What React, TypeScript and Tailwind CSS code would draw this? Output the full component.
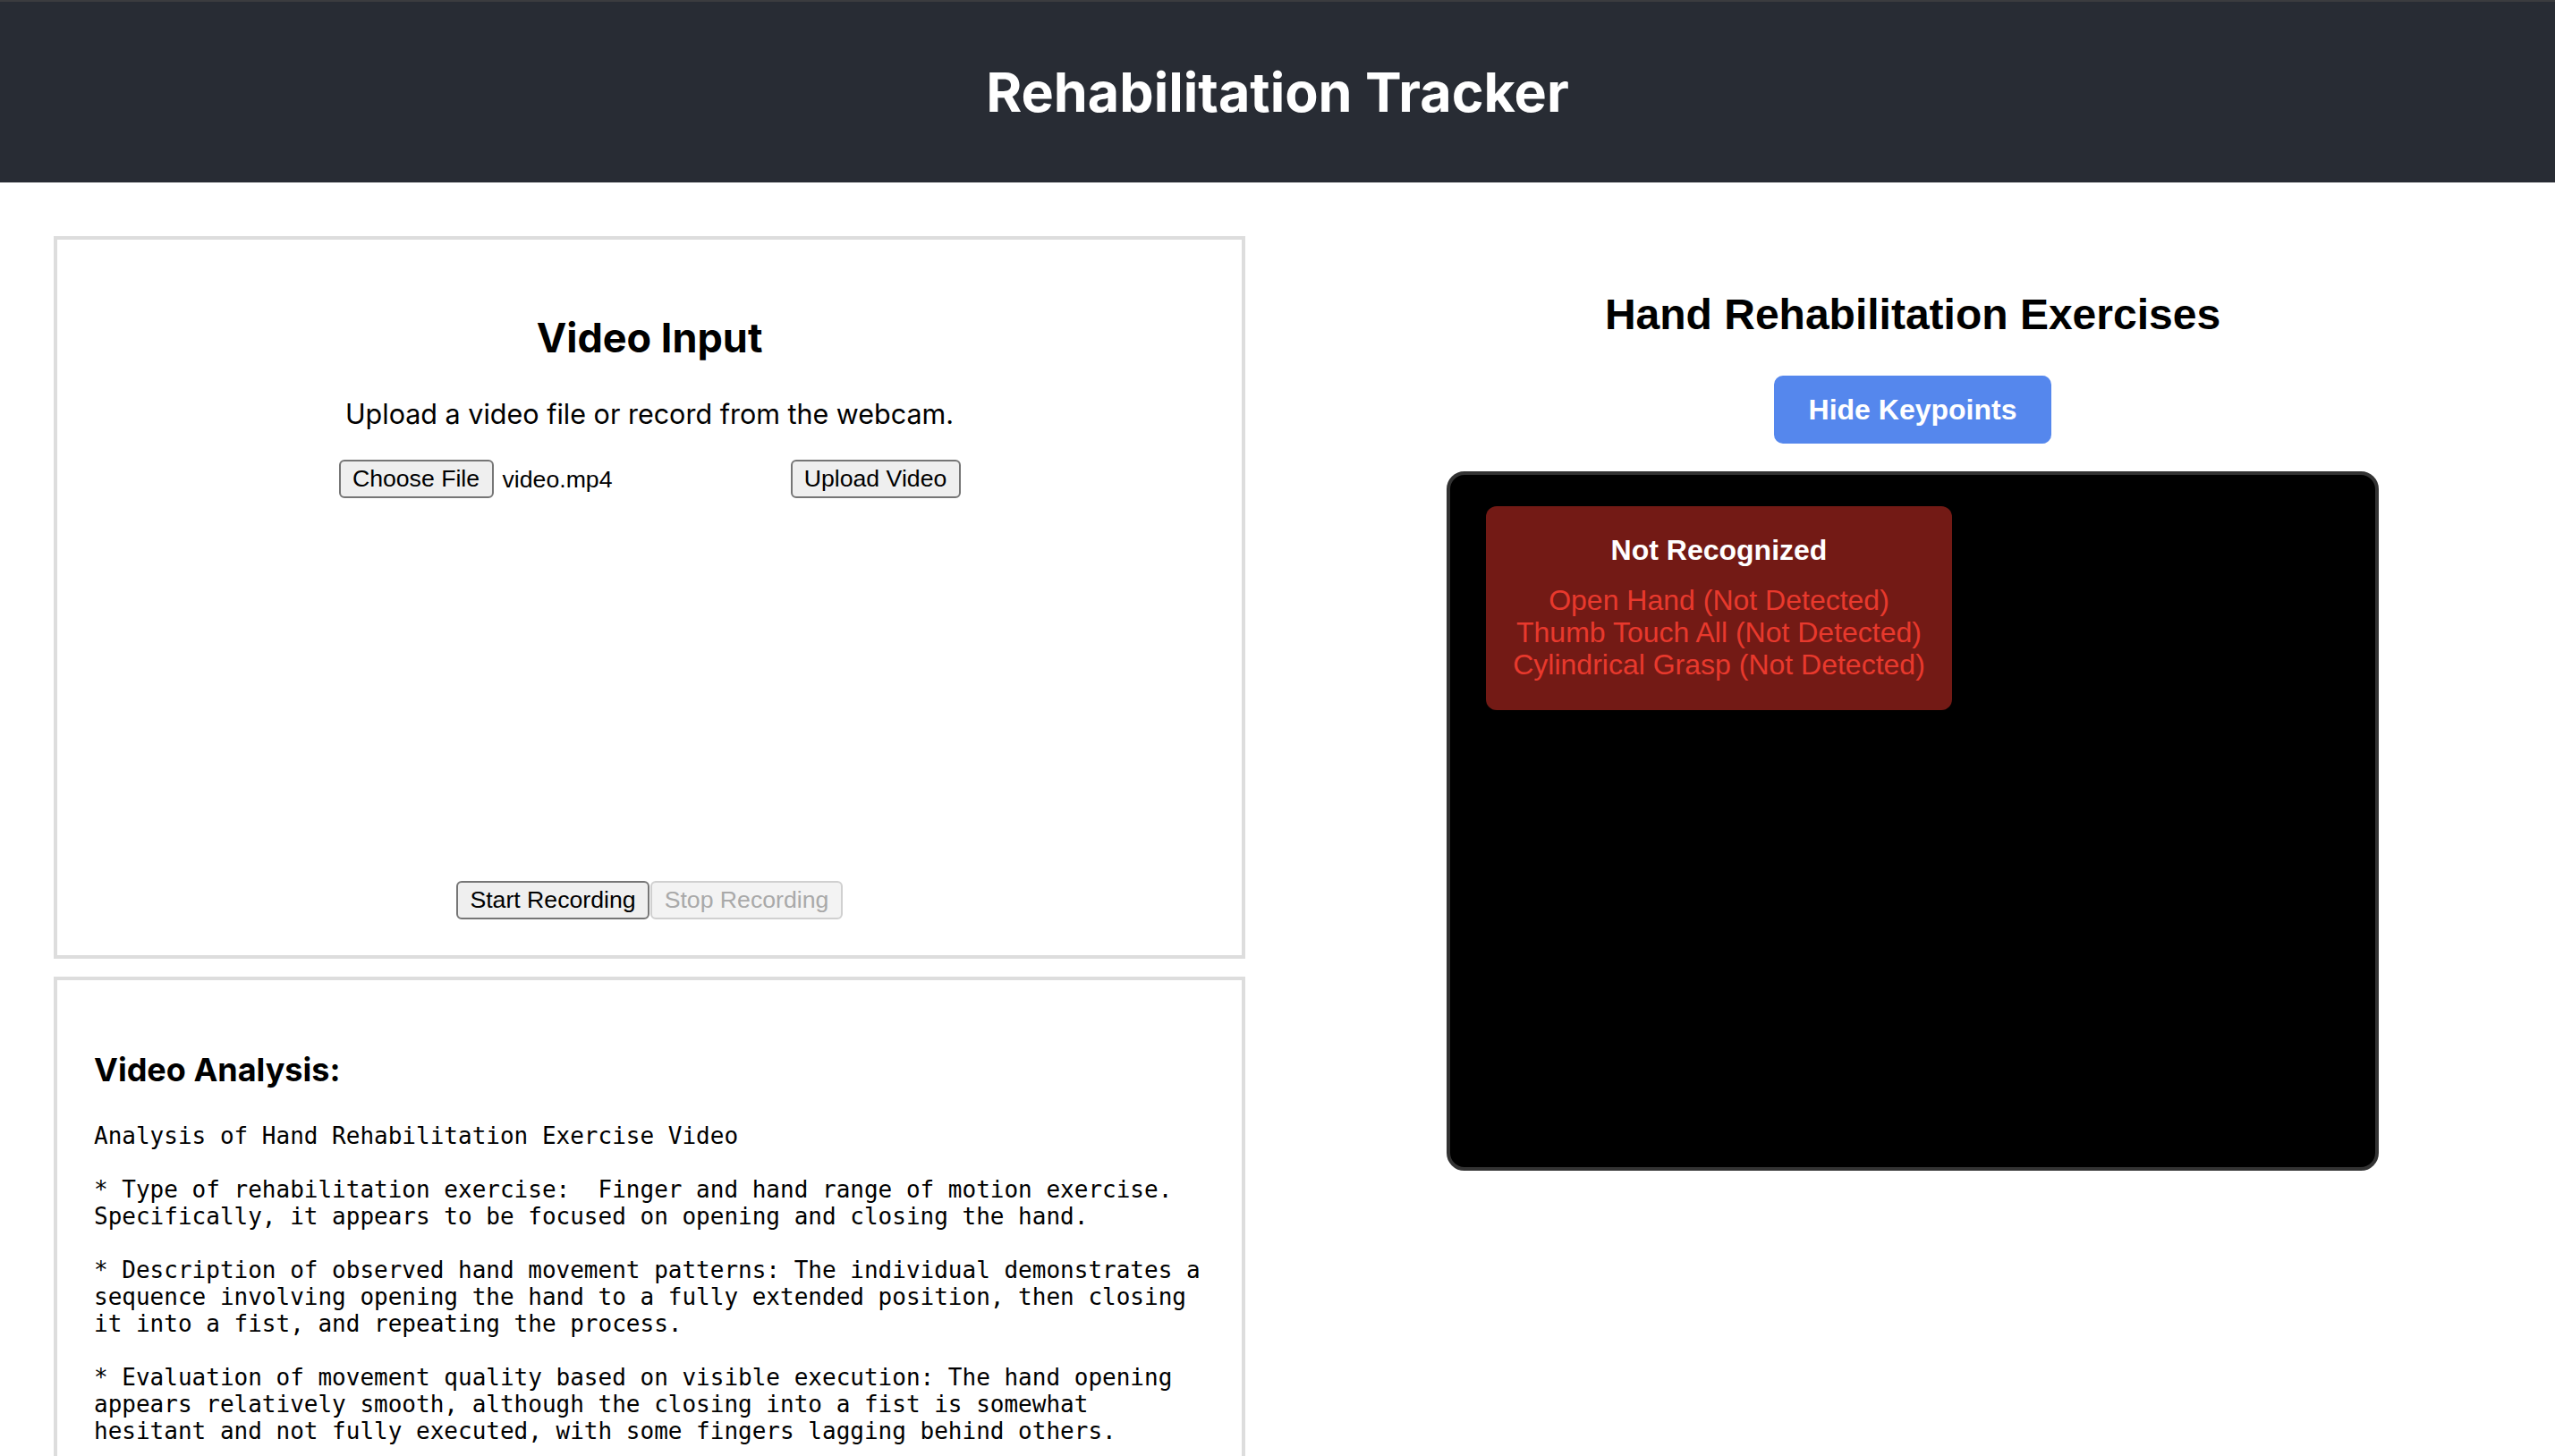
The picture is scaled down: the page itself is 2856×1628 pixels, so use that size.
import React from "react";

const analysis = `Analysis of Hand Rehabilitation Exercise Video

* Type of rehabilitation exercise:  Finger and hand range of motion exercise. Specifically, it appears to be focused on opening and closing the hand.

* Description of observed hand movement patterns: The individual demonstrates a sequence involving opening the hand to a fully extended position, then closing it into a fist, and repeating the process.

* Evaluation of movement quality based on visible execution: The hand opening appears relatively smooth, although the closing into a fist is somewhat hesitant and not fully executed, with some fingers lagging behind others.`;

const exercises = ["Open Hand", "Thumb Touch All", "Cylindrical Grasp"];

const btn =
  "h-[43px] bg-[#efefef] border-2 border-[#767676] rounded-[6px] text-[26.67px] leading-none text-black font-['Liberation_Sans',Arial,sans-serif] flex items-center justify-center";

export default function App() {
  return (
    <div className="min-h-screen bg-white font-['Inter',sans-serif] text-black">
      {/* barra do topo */}
      <header className="h-[204px] bg-[#282c34] border-t-2 border-[#3b3c3f] flex items-center justify-center">
        <h1 className="text-white text-[61px] font-bold leading-none">Rehabilitation Tracker</h1>
      </header>

      <main className="flex items-start pt-[60px]">
        {/* coluna da esquerda */}
        <div className="ml-[60px] w-[1332px] flex flex-col gap-[20px]">
          <section className="border-4 border-[#dddddd] bg-white h-[808px] flex flex-col items-center">
            <h2 className="mt-[83px] text-[45px] leading-[54px] font-bold">Video Input</h2>
            <p className="mt-[40px] text-[30.5px] leading-[36px]">Upload a video file or record from the webcam.</p>
            <div className="mt-[33px] flex items-center">
              <div className="w-[497px] flex items-center">
                <button className={btn + " w-[173px]"}>Choose File</button>
                <span className="ml-[10px] text-[26.67px] font-['Liberation_Sans',Arial,sans-serif]">video.mp4</span>
              </div>
              <button className={btn + " w-[190px] ml-[8px]"}>Upload Video</button>
            </div>
            <div className="h-[428px]" />
            <div className="flex items-center gap-[1px]">
              <button className={btn + " w-[216px]"}>Start Recording</button>
              <button
                disabled
                className="w-[215px] h-[43px] bg-[#f3f3f3] border-2 border-[#d0d0d0] rounded-[6px] text-[26.67px] leading-none text-[#a9a9a9] font-['Liberation_Sans',Arial,sans-serif] flex items-center justify-center"
              >
                Stop Recording
              </button>
            </div>
          </section>

          <section className="border-4 border-[#dddddd] bg-white px-[41px] pb-[60px]">
            <h3 className="mt-[78px] text-[36px] leading-[44px] font-bold">Video Analysis:</h3>
            <pre className="mt-[37px] w-[1243px] whitespace-pre-wrap text-[26px] leading-[30px] font-['DejaVu_Sans_Mono',monospace]">
              {analysis}
            </pre>
          </section>
        </div>

        {/* coluna da direita */}
        <div className="ml-[28px] flex-1 flex flex-col items-center font-['Liberation_Sans',Arial,sans-serif]">
          <h2 className="mt-[61px] text-[48px] leading-[54px] font-bold">Hand Rehabilitation Exercises</h2>
          <button className="mt-[41px] w-[310px] h-[76px] bg-[#5587ed] rounded-[10px] text-white text-[32px] font-bold leading-none">
            Hide Keypoints
          </button>
          <div className="mt-[31px] w-[1042px] h-[782px] border-4 border-[#333333] rounded-[20px] bg-black relative">
            <div className="absolute left-[40px] top-[35px] w-[521px] h-[228px] bg-[#731a15] rounded-[12px] pt-[31px] flex flex-col items-center">
              <div className="text-white text-[32px] leading-[36px] font-bold">Not Recognized</div>
              <div className="mt-[20px] flex flex-col items-center text-[#e8392d] text-[32px] leading-[36px]">
                {exercises.map((e) => (
                  <div key={e}>{e} (Not Detected)</div>
                ))}
              </div>
            </div>
          </div>
        </div>
      </main>
    </div>
  );
}
